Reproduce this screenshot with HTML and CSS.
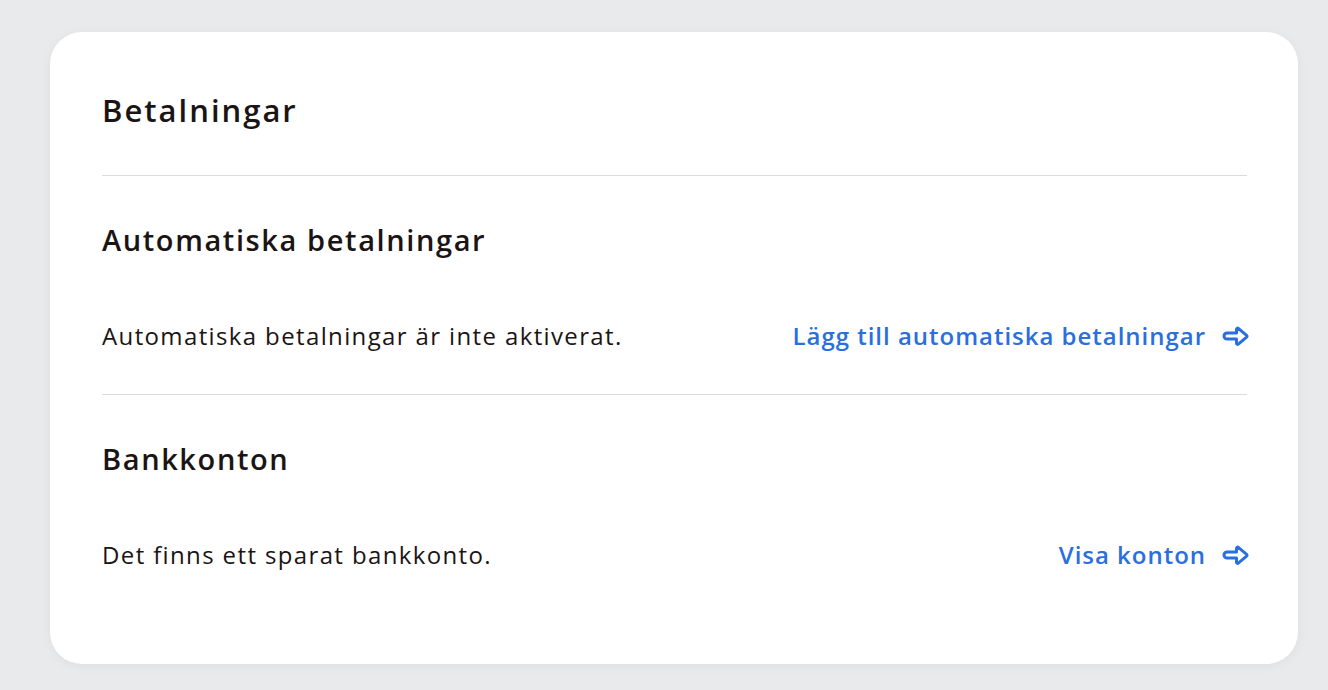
FILE: index.html
```html
<!DOCTYPE html>
<html lang="sv">
<head>
<meta charset="utf-8">
<title>Betalningar</title>
<link rel="stylesheet" href="styles.css">
</head>
<body>
<main class="card">
  <header class="card-header">
    <h1 class="title">Betalningar</h1>
  </header>
  <section class="section">
    <h2 class="section-title">Automatiska betalningar</h2>
    <div class="row">
      <p class="row-text">Automatiska betalningar är inte aktiverat.</p>
      <a class="link" href="#">Lägg till automatiska betalningar
        <svg class="arrow" viewBox="0 0 28 22" width="28" height="22" aria-hidden="true"><path d="M5 8H14.5V4.3c0-1 1.1-1.5 1.8-.9l8.3 6.9c.6.5.6 1.4 0 1.9l-8.3 6.9c-.7.6-1.8.1-1.8-.9V14H5a3 3 0 0 1 0-6z"/></svg>
      </a>
    </div>
  </section>
  <section class="section">
    <h2 class="section-title">Bankkonton</h2>
    <div class="row">
      <p class="row-text">Det finns ett sparat bankkonto.</p>
      <a class="link" href="#">Visa konton
        <svg class="arrow" viewBox="0 0 28 22" width="28" height="22" aria-hidden="true"><path d="M5 8H14.5V4.3c0-1 1.1-1.5 1.8-.9l8.3 6.9c.6.5.6 1.4 0 1.9l-8.3 6.9c-.7.6-1.8.1-1.8-.9V14H5a3 3 0 0 1 0-6z"/></svg>
      </a>
    </div>
  </section>
</main>
</body>
</html>
```
FILE: styles.css
```css
html, body {
  margin: 0;
  padding: 0;
}
body {
  background: #e9eaec;
  font-family: "Open Sans", "Noto Sans", "Liberation Sans", sans-serif;
  color: #1b1414;
  padding: 32px 30px 26px 50px;
  height: 690px;
  box-sizing: border-box;
}
.card {
  width: 1248px;
  height: 632px;
  box-sizing: border-box;
  background: #fff;
  border-radius: 32px;
  box-shadow: 0 2px 12px rgba(0, 0, 0, 0.05);
  padding: 60px 51px 52px 52px;
}
.card-header {
  padding-bottom: 47px;
  border-bottom: 1px solid #dddcdc;
}
.title {
  margin: 0;
  font-size: 31px;
  line-height: 36px;
  font-weight: 600;
  letter-spacing: 2px;
}
.section {
  padding: 46px 0 42px;
  border-bottom: 1px solid #dddcdc;
}
.section:last-child {
  border-bottom: none;
}
.section-title {
  margin: 0;
  font-size: 29px;
  line-height: 36px;
  font-weight: 600;
  letter-spacing: 1.6px;
}
.row {
  margin-top: 62px;
  display: flex;
  justify-content: space-between;
  align-items: center;
  height: 32px;
}
.row-text {
  margin: 0;
  font-size: 24px;
  line-height: 32px;
  font-weight: 400;
  letter-spacing: 1.37px;
}
.link {
  display: flex;
  align-items: center;
  gap: 16px;
  color: #2a6fe0;
  text-decoration: none;
  font-size: 24px;
  line-height: 32px;
  font-weight: 600;
  letter-spacing: 0.98px;
  margin-right: -3px;
}
.arrow {
  fill: #fff;
  stroke: #2a6fe0;
  stroke-width: 3;
  stroke-linejoin: round;
}
```
